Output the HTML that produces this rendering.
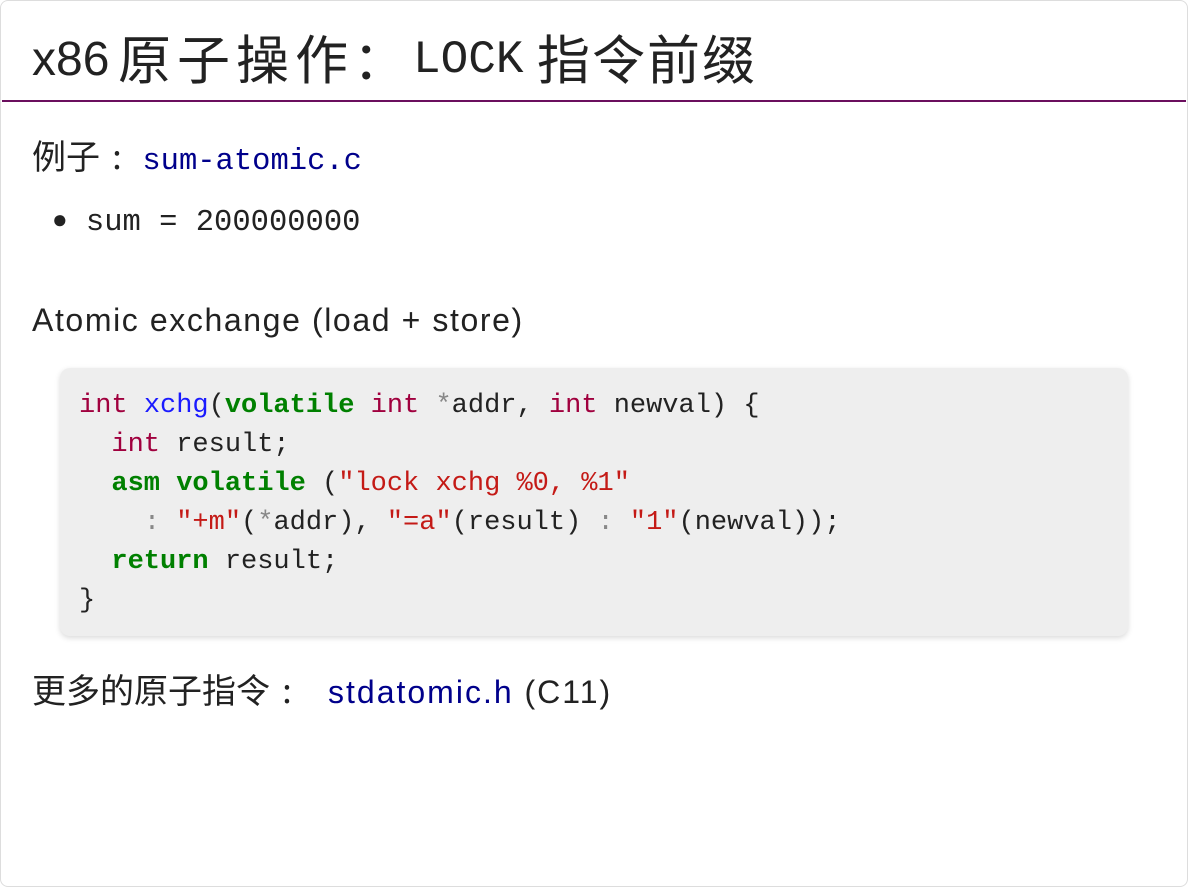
<!DOCTYPE html>
<html><head><meta charset="utf-8"><style>
body{margin:0;width:1188px;height:887px;background:#fff;overflow:hidden;font-family:"Liberation Sans","Noto Sans CJK SC",sans-serif;color:#222}
.frame{position:absolute;left:0;top:0;width:1186px;height:885px;border:1px solid #ddd;border-radius:8px}
.ti{position:absolute;top:17px;font-size:53px;line-height:80px;white-space:nowrap;color:#222;font-family:"Noto Sans CJK SC",sans-serif}
.m{font-family:"Liberation Mono","Noto Sans CJK SC",monospace}
.hr{position:absolute;left:2px;top:100px;width:1184px;height:2px;background:#6b0f5e}
.p{position:absolute;left:32px;font-size:30px;white-space:nowrap}
.cj{font-family:"Noto Sans CJK SC",sans-serif;font-size:34px}
.col{display:inline-block;width:1em;text-align:center}
a{color:#00008b;text-decoration:none}
.code{position:absolute;left:60px;top:368px;width:1068px;height:268px;background:#eee;border-radius:10px;box-shadow:0 2px 6px rgba(0,0,0,.15)}
pre{margin:0;position:absolute;left:19px;top:19px;font-family:"Liberation Mono",monospace;font-size:27px;line-height:39px;color:#222}
.k{color:#a0003e}.f{color:#1a1aff}.g{color:#008000;font-weight:bold}.s{color:#c41a16}.o{color:#888}
</style></head><body>
<div class="frame"></div>
<div class="ti" style="left:32px;font-family:'Liberation Sans';font-size:48px;top:20px">x86</div>
<div class="ti" style="left:118px;letter-spacing:6px">原子操作</div>
<div class="ti" style="left:353px">：</div>
<div class="ti m" style="left:413px;font-size:46px;top:20px">LOCK</div>
<div class="ti" style="left:537px;letter-spacing:2px">指令前缀</div>
<div class="hr"></div>
<div class="p" style="top:130px"><span class="cj">例子<span class="col">:</span></span> <a class="m" style="font-size:30.5px">sum-atomic.c</a></div>
<div class="p m" style="top:206px;left:52px;font-size:30.5px"><span style="font-size:26px;position:relative;top:-2px">●</span>&nbsp;sum = 200000000</div>
<div class="p" style="top:302px;font-size:32px;letter-spacing:1.6px">Atomic exchange (load + store)</div>
<div class="code"><pre><span class="k">int</span> <span class="f">xchg</span>(<span class="g">volatile</span> <span class="k">int</span> <span class="o">*</span>addr, <span class="k">int</span> newval) {
  <span class="k">int</span> result;
  <span class="g">asm</span> <span class="g">volatile</span> (<span class="s">"lock xchg %0, %1"</span>
    <span class="o">:</span> <span class="s">"+m"</span>(<span class="o">*</span>addr), <span class="s">"=a"</span>(result) <span class="o">:</span> <span class="s">"1"</span>(newval));
  <span class="g">return</span> result;
}</pre></div>
<div class="p" style="top:664px"><span class="cj">更多的原子指令<span class="col">:</span></span><span style="font-size:32px;letter-spacing:2px;margin-left:24px"><a>stdatomic.h</a> (C11)</span></div>
</body></html>
